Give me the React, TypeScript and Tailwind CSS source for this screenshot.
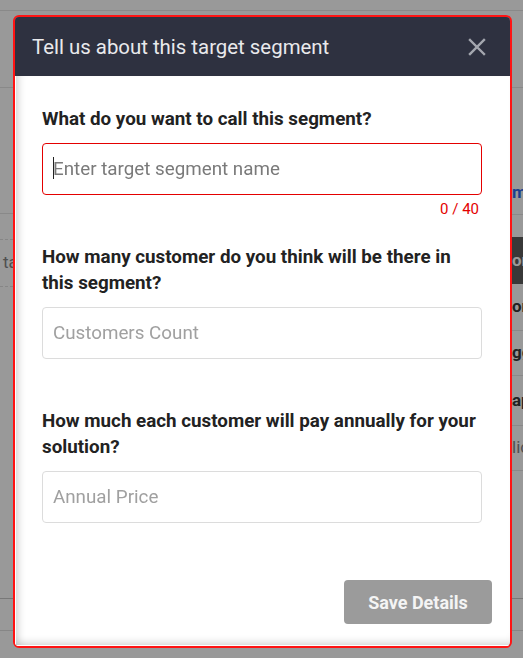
import { useState } from 'react';

const font = "font-['Roboto','Liberation_Sans',sans-serif]";

function Field({
  label,
  placeholder,
  value,
  onChange,
  active = false,
  counter,
}: {
  label: string;
  placeholder: string;
  value: string;
  onChange: (v: string) => void;
  active?: boolean;
  counter?: string;
}) {
  return (
    <div className="flex flex-col">
      <label className="mb-[11px] text-[18.8px] font-bold leading-[26px] text-[#222]">{label}</label>
      <div className="relative">
        <input
          value={value}
          onChange={(e) => onChange(e.target.value)}
          placeholder={placeholder}
          className={`h-[52px] w-full rounded-[4px] border bg-white pl-[10px] pr-3 text-[18.8px] outline-none ${
            active ? 'border-[#e40000] placeholder:text-[#7a7a7a]' : 'border-[#dcdcdc] placeholder:text-[#a0a0a0]'
          }`}
        />
        {/* fake caret for the focused field */}
        {active && !value && <span className="absolute left-[11px] top-[14px] h-[22px] w-px bg-[#222]" />}
      </div>
      <div className="h-[49px]">
        {counter && <div className="mt-[4px] pr-[3px] text-right text-[15px] leading-[20px] text-[#e40000]">{counter}</div>}
      </div>
    </div>
  );
}

export default function App() {
  const [name, setName] = useState('');
  const [count, setCount] = useState('');
  const [price, setPrice] = useState('');

  return (
    <div className={`relative h-[658px] w-[523px] overflow-hidden bg-white ${font}`}>
      {/* page behind the overlay */}
      <div className="h-[11px] border-b border-[#e4e4e4]" />
      <div className="flex h-[587px]">
        <div className="w-[13px] overflow-hidden whitespace-nowrap">
          <div className="h-[77px] border-b border-[#e4e4e4]" />
          <div className="h-[126px] border-b border-[#e4e4e4]" />
          <div className="h-[26px] border-b border-dashed border-[#e0e0e0]" />
          <div className="flex h-[47px] items-center border-b border-dashed border-[#e0e0e0] pl-[3px] text-[17px] text-[#858585]">
            target
          </div>
        </div>
        <div className="w-[499px]" />
        <div className="w-[11px] overflow-hidden whitespace-nowrap text-[17px]">
          <div className="h-[77px] border-b border-[#e4e4e4]" />
          <div className="flex h-[127px] flex-col justify-end border-b border-[#e4e4e4] pb-[10px]">
            <span className="leading-[24px] font-bold text-[#3169ee]">more</span>
          </div>
          <div className="h-[22px]" />
          <div className="flex h-[47px] items-center bg-[#5e5e5e] font-bold text-white">ore</div>
          <div className="flex h-[47px] items-center border-b border-[#e4e4e4] font-bold text-[#393939]">ore</div>
          <div className="flex h-[45px] items-center border-b border-[#e4e4e4] font-bold text-[#393939]">gg</div>
          <div className="flex h-[50px] items-center border-b border-[#e4e4e4] font-bold text-[#393939]">ap</div>
          <div className="flex h-[45px] items-center border-b border-[#e4e4e4] text-[#858585]">lic</div>
        </div>
      </div>
      <div className="h-[32px] border-t border-[#c8c8c8]" />
      <div className="border-t border-[#e0e0e0]" />

      {/* overlay + modal */}
      <div className="fixed inset-0 bg-black/40">
        <div className="ml-[13px] mt-[15px] flex w-[499px] flex-col overflow-hidden rounded-[6px] border-2 border-[#ff1414]">
          <div className="flex h-[59px] items-center justify-between bg-[#2e3140] pl-[17px] pr-[24px]">
            <h2 className="text-[20.4px] leading-[28px] text-[#e9e9ec]">Tell us about this target segment</h2>
            <button className="flex h-[18px] w-[18px] items-center justify-center">
              <svg width="18" height="18" viewBox="0 0 18 18" fill="none" stroke="#a4a7af" strokeWidth="2.4" strokeLinecap="square">
                <path d="M2 2L16 16M16 2L2 16" />
              </svg>
            </button>
          </div>
          <div className="flex flex-col border-b border-l border-white bg-white pb-[21px] pl-[26px] pr-[28px] pt-[30px] shadow-[inset_8px_0_8px_-6px_rgba(0,0,0,0.18),inset_0_-8px_8px_-6px_rgba(0,0,0,0.18)]">
            <Field
              label="What do you want to call this segment?"
              placeholder="Enter target segment name"
              value={name}
              onChange={setName}
              active
              counter={`${name.length} / 40`}
            />
            <Field
              label="How many customer do you think will be there in this segment?"
              placeholder="Customers Count"
              value={count}
              onChange={setCount}
            />
            <Field
              label="How much each customer will pay annually for your solution?"
              placeholder="Annual Price"
              value={price}
              onChange={setPrice}
            />
            <div className="-mt-[49px] flex justify-end pt-[57px]">
              <button className="-mr-[10px] h-[44px] w-[148px] rounded-[4px] bg-[#9b9b9b] text-[18px] font-bold text-[#f4f4f4]">
                Save Details
              </button>
            </div>
          </div>
        </div>
      </div>
    </div>
  );
}
